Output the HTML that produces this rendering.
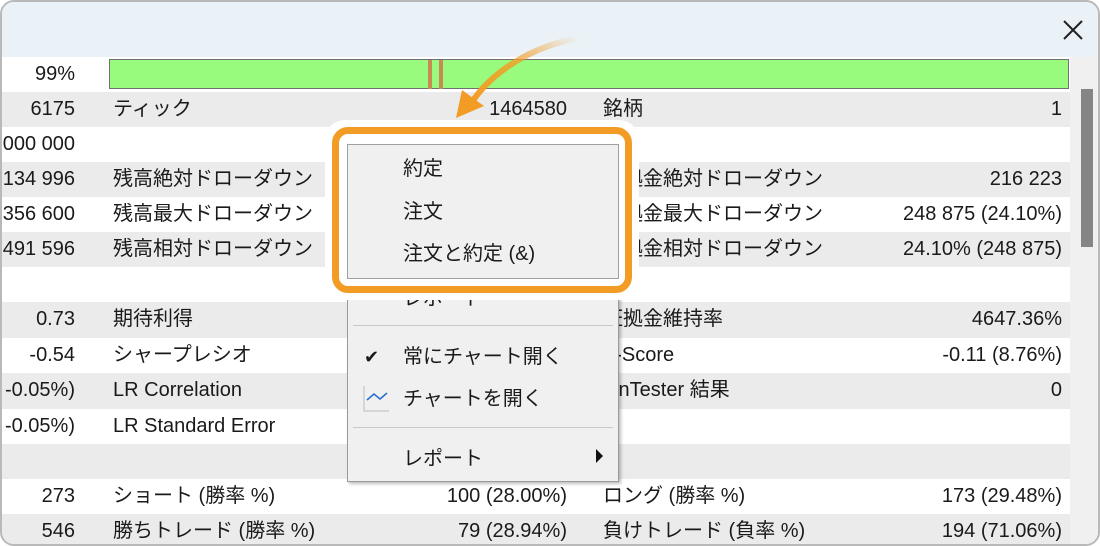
<!DOCTYPE html>
<html><head><meta charset="utf-8"><style>
*{margin:0;padding:0;box-sizing:border-box}
body{width:1100px;height:546px;background:#fff;overflow:hidden;position:relative;font-family:"Liberation Sans","Noto Sans CJK JP",sans-serif;font-size:20px;color:#1a1a1a}
.win{position:absolute;left:0;top:0;width:1100px;height:546px;border:2px solid #b9b9b9;border-radius:14px;overflow:hidden;background:#fff}
.title{position:absolute;left:0;top:0;width:1100px;height:55px;background:#eaf2f8}
.row{position:absolute;left:0;width:1068px;height:35px;line-height:35px}
.g{background:#ebebeb}
.c{position:absolute;top:0;white-space:nowrap;line-height:35px;height:35px}
.sb{position:absolute;left:1068px;top:55px;width:32px;height:491px;background:#f0f0f0}
.thumb{position:absolute;left:1079px;top:87px;width:12px;height:158px;background:#858585}
.menu{position:absolute;left:345px;top:142px;width:272px;height:338px;background:#f0f0f0;border:1px solid #9a9a9a;box-shadow:2px 2px 3px rgba(0,0,0,.25)}
.mi{position:absolute;left:55px;white-space:nowrap;line-height:28px}
.sep{position:absolute;left:5px;width:260px;height:1px;background:#c8c8c8}
.hl{position:absolute;left:330px;top:125px;width:300px;height:166px;border:7px solid #f39c25;border-radius:16px;background:transparent}
.inner{position:absolute;left:345px;top:142px;width:272px;height:135px;border:1px solid #a0a0a0;background:#f0f0f0}
.bar{position:absolute;left:107px;top:57px;width:960px;height:30px;background:#98fb7e;border:1px solid #707070}
</style></head><body>
<div class="win">
<div class="title"></div>
<svg style="position:absolute;left:1060px;top:17px" width="22" height="22"><path d="M2 2L20 20M20 2L2 20" stroke="#222" stroke-width="2"/></svg>
<div class="row" style="top:55px"><span class="c" style="right:995px">99%</span></div>
<div class="bar"></div>
<div style="position:absolute;left:426px;top:58px;width:4px;height:29px;background:#c88a50"></div>
<div style="position:absolute;left:437px;top:58px;width:4px;height:29px;background:#c88a50"></div>

<div class="row g" style="top:90px"><span class="c" style="right:995px">6175</span><span class="c" style="left:111px">ティック</span><span class="c" style="right:503px">1464580</span><span class="c" style="left:601px">銘柄</span><span class="c" style="right:8px">1</span></div>
<div class="row" style="top:125px"><span class="c" style="right:995px">000 000</span></div>
<div class="row g" style="top:160px"><span class="c" style="right:995px">134 996</span><span class="c" style="left:111px">残高絶対ドローダウン</span><span class="c" style="left:601px">証拠金絶対ドローダウン</span><span class="c" style="right:8px">216 223</span></div>
<div class="row" style="top:195px"><span class="c" style="right:995px">356 600</span><span class="c" style="left:111px">残高最大ドローダウン</span><span class="c" style="left:601px">証拠金最大ドローダウン</span><span class="c" style="right:8px">248 875 (24.10%)</span></div>
<div class="row g" style="top:230px"><span class="c" style="right:995px">491 596</span><span class="c" style="left:111px">残高相対ドローダウン</span><span class="c" style="left:601px">証拠金相対ドローダウン</span><span class="c" style="right:8px">24.10% (248 875)</span></div>
<div class="row" style="top:265px"></div>
<div class="row g" style="top:300px;height:36px"><span class="c" style="right:995px">0.73</span><span class="c" style="left:111px">期待利得</span><span class="c" style="left:601px">証拠金維持率</span><span class="c" style="right:8px">4647.36%</span></div>
<div class="row" style="top:336px"><span class="c" style="right:995px">-0.54</span><span class="c" style="left:111px">シャープレシオ</span><span class="c" style="left:601px">Z-Score</span><span class="c" style="right:8px">-0.11 (8.76%)</span></div>
<div class="row g" style="top:371px;height:36px"><span class="c" style="right:995px">-0.05%)</span><span class="c" style="left:111px">LR Correlation</span><span class="c" style="left:601px">OnTester 結果</span><span class="c" style="right:8px">0</span></div>
<div class="row" style="top:407px"><span class="c" style="right:995px">-0.05%)</span><span class="c" style="left:111px">LR Standard Error</span></div>
<div class="row g" style="top:442px"></div>
<div class="row" style="top:477px"><span class="c" style="right:995px">273</span><span class="c" style="left:111px">ショート (勝率 %)</span><span class="c" style="right:503px">100 (28.00%)</span><span class="c" style="left:601px">ロング (勝率 %)</span><span class="c" style="right:8px">173 (29.48%)</span></div>
<div class="row g" style="top:512px;height:34px"><span class="c" style="right:995px">546</span><span class="c" style="left:111px">勝ちトレード (勝率 %)</span><span class="c" style="right:503px">79 (28.94%)</span><span class="c" style="left:601px">負けトレード (負率 %)</span><span class="c" style="right:8px">194 (71.06%)</span></div>

<div class="sb"></div><div class="thumb"></div>

<div class="menu">
<span class="mi" style="top:140px">レポート</span>
<span style="position:absolute;left:18px;top:142px;font-size:14px">✔</span>
<div class="sep" style="top:180px"></div>
<span style="position:absolute;left:16px;top:200px;font-size:18px;line-height:24px">✔</span>
<span class="mi" style="top:198px">常にチャート開く</span>
<svg style="position:absolute;left:14px;top:240px" width="28" height="28"><path d="M2 1V26H27" stroke="#bbb" fill="none"/><path d="M5 15L12 9L18 14L25 8" stroke="#2a6fcf" stroke-width="1.6" fill="none"/></svg>
<span class="mi" style="top:240px">チャートを開く</span>
<div class="sep" style="top:282px"></div>
<span class="mi" style="top:300px">レポート</span>
<svg style="position:absolute;left:248px;top:304px" width="8" height="14"><path d="M0 0L7 7L0 14Z" fill="#111"/></svg>
</div>
<div style="position:absolute;left:323px;top:118px;width:314px;height:180px;background:#fff;border-radius:20px"></div>
<div class="inner">
<span class="mi" style="top:10px">約定</span>
<span class="mi" style="top:53px">注文</span>
<span class="mi" style="top:95px">注文と約定 (&amp;)</span>
</div>
<div class="hl"></div>
<svg style="position:absolute;left:440px;top:30px" width="150" height="100">
<defs><linearGradient id="ag" x1="1" y1="0" x2="0" y2="1"><stop offset="0" stop-color="#f39c25" stop-opacity="0"/><stop offset="0.5" stop-color="#f39c25" stop-opacity=".8"/><stop offset="1" stop-color="#f39c25"/></linearGradient></defs>
<path d="M137 6C90 14 50 40 30 70" stroke="url(#ag)" stroke-width="6" fill="none"/>
<path d="M14 86L20 58L42 74Z" fill="#f39c25"/>
</svg>
</div>
</body></html>
